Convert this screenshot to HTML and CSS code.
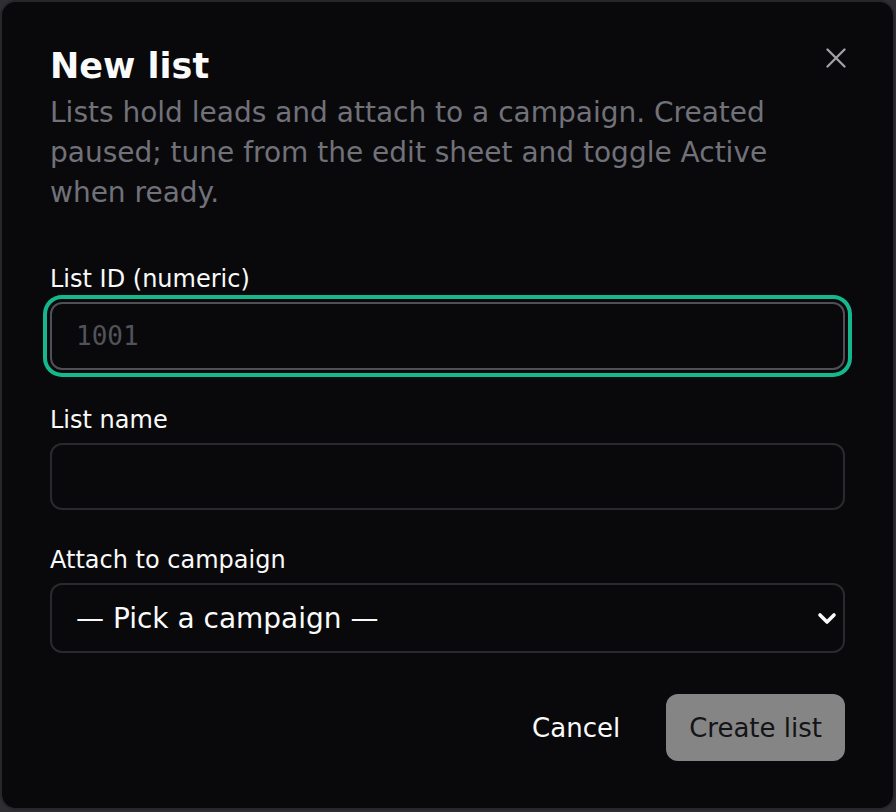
FILE: index.html
```html
<!DOCTYPE html>
<html lang="en">
<head>
    <meta charset="UTF-8">
    <meta name="viewport" content="width=device-width, initial-scale=1.0">
    <title>New list</title>
    <link rel="stylesheet" href="styles.css">
</head>
<body>
    <!-- Dialog: New list -->
    <div class="dialog">
        <button class="close" aria-label="Close">
            <svg width="20" height="20" viewBox="0 0 20 20">
                <path d="M1.5 1.5 L18.5 18.5 M18.5 1.5 L1.5 18.5" stroke="#a1a1aa" stroke-width="2.3" stroke-linecap="round" fill="none"/>
            </svg>
        </button>

        <div class="header">
            <h1 class="title">New list</h1>
            <p class="desc">Lists hold leads and attach to a campaign. Created paused; tune from the edit sheet and toggle Active when ready.</p>
        </div>

        <form class="form">
            <div class="field">
                <label class="label" for="listId">List ID (numeric)</label>
                <input id="listId" class="input input-id focused" type="text" placeholder="1001">
            </div>
            <div class="field">
                <label class="label" for="listName">List name</label>
                <input id="listName" class="input" type="text">
            </div>
            <div class="field">
                <label class="label" for="campaign">Attach to campaign</label>
                <div class="select-wrap">
                    <select id="campaign" class="select">
                        <option>— Pick a campaign —</option>
                    </select>
                    <svg class="chevron" width="20" height="13" viewBox="0 0 20 13">
                        <polyline points="3,3 10,10 17,3" stroke="#fafafa" stroke-width="3.6" fill="none" stroke-linecap="round" stroke-linejoin="round"/>
                    </svg>
                </div>
            </div>
        </form>

        <div class="footer">
            <button class="btn btn-ghost" type="button">Cancel</button>
            <button class="btn btn-primary" type="button">Create list</button>
        </div>
    </div>
</body>
</html>
```

FILE: styles.css
```css
body {
    margin: 0;
    background-color: #2f2f33;
    font-family: "DejaVu Sans", "Liberation Sans", sans-serif;
    color: #fafafa;
}
.dialog {
    position: relative;
    box-sizing: border-box;
    width: 895px;
    height: 810px;
    padding: 40px 48px 48px 48px;
    background-color: #09090b;
    border: 2px solid #27272a;
    border-radius: 16px;
    display: flex;
    flex-direction: column;
}
.close {
    position: absolute;
    top: 43px;
    right: 44px;
    width: 26px;
    height: 26px;
    padding: 0;
    border: none;
    background: none;
    display: flex;
    align-items: center;
    justify-content: center;
    cursor: pointer;
}
.header {
    display: flex;
    flex-direction: column;
    gap: 3px;
}
.title {
    margin: 0;
    font-size: 35px;
    line-height: 48px;
    font-weight: bold;
    color: #fafafa;
}
.desc {
    margin: 0;
    font-size: 28px;
    line-height: 40px;
    color: #71717a;
}
.form {
    margin-top: 50px;
    display: flex;
    flex-direction: column;
    gap: 34px;
}
.field {
    display: flex;
    flex-direction: column;
    gap: 7px;
}
.label {
    font-size: 24px;
    line-height: 32px;
    color: #fafafa;
}
.input, .select {
    box-sizing: border-box;
    width: 100%;
    height: 67px;
    margin: 0;
    padding: 0 24px;
    background-color: #09090b;
    border: 2px solid #2a2a2e;
    border-radius: 12px;
    color: #fafafa;
    font-family: "DejaVu Sans", sans-serif;
    font-size: 24px;
    outline: none;
}
.input-id {
    font-family: "DejaVu Sans Mono", "Liberation Mono", monospace;
    font-size: 26px;
}
.input::placeholder {
    color: #52525b;
}
.focused {
    height: 68px;
    border-color: #4f4f57;
    box-shadow: 0 0 0 3px #09090b, 0 0 0 7px #14b88c;
}
.select-wrap {
    position: relative;
}
.select {
    height: 70px;
    font-size: 28px;
    -webkit-appearance: none;
    appearance: none;
}
.chevron {
    position: absolute;
    right: 8px;
    top: 29px;
    pointer-events: none;
}
.footer {
    margin-top: 41px;
    display: flex;
    justify-content: flex-end;
    gap: 22px;
}
.btn {
    height: 67px;
    padding: 0 24px;
    border: none;
    border-radius: 12px;
    font-family: "DejaVu Sans", sans-serif;
    font-size: 26px;
    white-space: nowrap;
    cursor: pointer;
}
.btn-ghost {
    background: none;
    color: #fafafa;
}
.btn-primary {
    padding: 0 23px;
    background-color: #858585;
    color: #141416;
}
```
